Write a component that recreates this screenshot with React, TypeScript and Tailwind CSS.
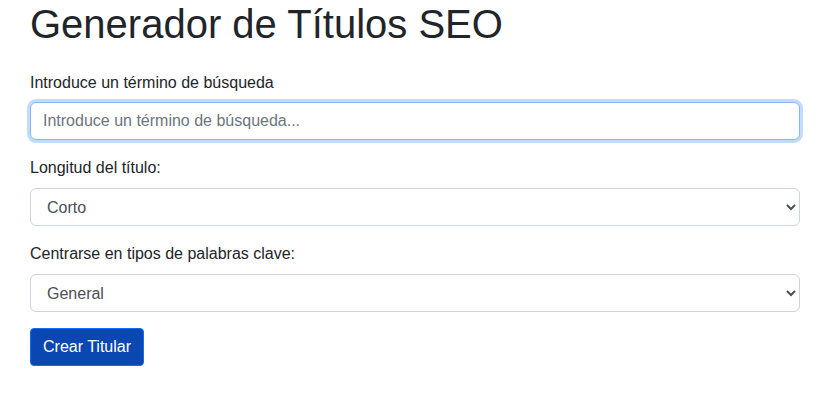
import React from "react";

export default function App() {
  return (
    <div className="min-h-[407px] w-full bg-white pl-[30px] pr-[31px] text-[#212529]" style={{ fontFamily: '"Liberation Sans", Arial, sans-serif' }}>
      <h1 className="m-0 text-[40px] font-normal leading-[48px]">Generador de Títulos SEO</h1>
      <div className="mt-[23px]">
        <label className="mb-[7px] block text-base leading-6">Introduce un término de búsqueda</label>
        <input
          type="text"
          autoFocus
          placeholder="Introduce un término de búsqueda..."
          className="block h-[38px] w-full rounded-[6px] border border-[#86b7fe] bg-white px-3 text-base text-[#495057] shadow-[0_0_0_3px_rgba(13,110,253,0.25)] outline-none placeholder:text-[#6c757d]"
        />
      </div>
      <div className="mt-4">
        <label className="mb-2 block text-base leading-6">Longitud del título:</label>
        <select className="block h-[38px] w-full rounded-[6px] border border-[#ced4da] bg-white px-3 text-base text-[#495057] outline-none">
          <option>Corto</option>
          <option>Medio</option>
          <option>Largo</option>
        </select>
      </div>
      <div className="mt-4">
        <label className="mb-2 block text-base leading-6">Centrarse en tipos de palabras clave:</label>
        <select className="block h-[38px] w-full rounded-[6px] border border-[#ced4da] bg-white px-3 text-base text-[#495057] outline-none">
          <option>General</option>
          <option>Long tail</option>
        </select>
      </div>
      <button className="mt-4 h-[38px] rounded-[4px] border border-[#0d6efd] bg-[#0b47b1] px-3 text-base leading-6 text-white">
        Crear Titular
      </button>
    </div>
  );
}
